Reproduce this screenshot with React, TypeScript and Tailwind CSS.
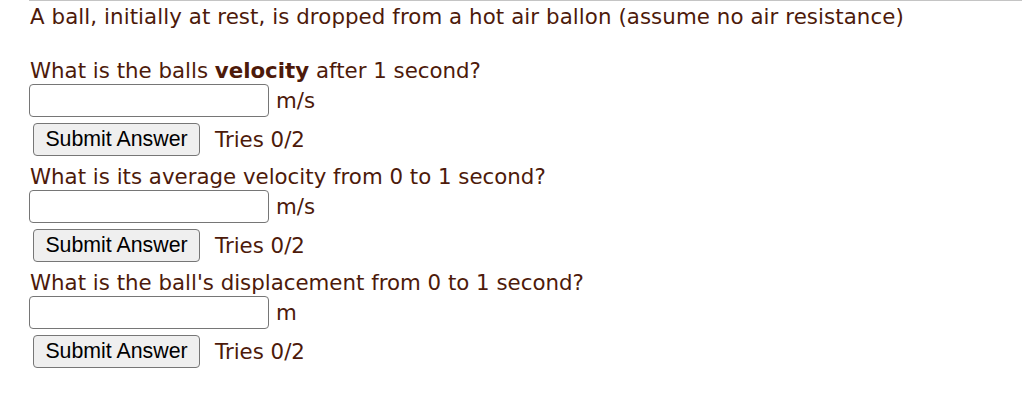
import React from "react";

const questions = [
  {
    label: (
      <>
        What is the balls <b className="font-bold">velocity</b> after 1 second?
      </>
    ),
    unit: "m/s",
  },
  { label: <>What is its average velocity from 0 to 1 second?</>, unit: "m/s" },
  { label: <>What is the ball's displacement from 0 to 1 second?</>, unit: "m" },
];

function Part({ label, unit }: { label: React.ReactNode; unit: string }) {
  return (
    <div>
      <p className="pl-[1px] leading-[26px]">{label}</p>
      <div className="flex items-center">
        <input
          type="text"
          className="h-[33px] w-[240px] rounded-[4px] border border-[#767676] bg-white"
        />
        <span className="ml-[7px] leading-[26px]">{unit}</span>
      </div>
      <div className="mt-[6px] mb-[8px] flex items-center">
        <button
          type="button"
          className="ml-[4px] h-[33px] w-[167px] rounded-[4px] border border-[#767676] bg-[#efefef] text-[21.33px] text-black [font-family:'Liberation_Sans',Arial,sans-serif]"
        >
          Submit Answer
        </button>
        <span className="ml-[15px] leading-[26px]">Tries 0/2</span>
      </div>
    </div>
  );
}

export default function App() {
  return (
    <div className="min-h-[410px] bg-white text-[21.33px] text-[#4d1a0a] [font-family:'DejaVu_Sans',Verdana,sans-serif]">
      <div className="ml-[29px] border-t border-[#c4c4c4]" />
      <div className="pl-[29px]">
        <p className="mt-[3px] pl-[1px] leading-[26px] tracking-[0.08px]">
          A ball, initially at rest, is dropped from a hot air ballon (assume no air resistance)
        </p>
        <div className="h-[28px]" />
        {questions.map((q, i) => (
          <Part key={i} label={q.label} unit={q.unit} />
        ))}
      </div>
    </div>
  );
}
